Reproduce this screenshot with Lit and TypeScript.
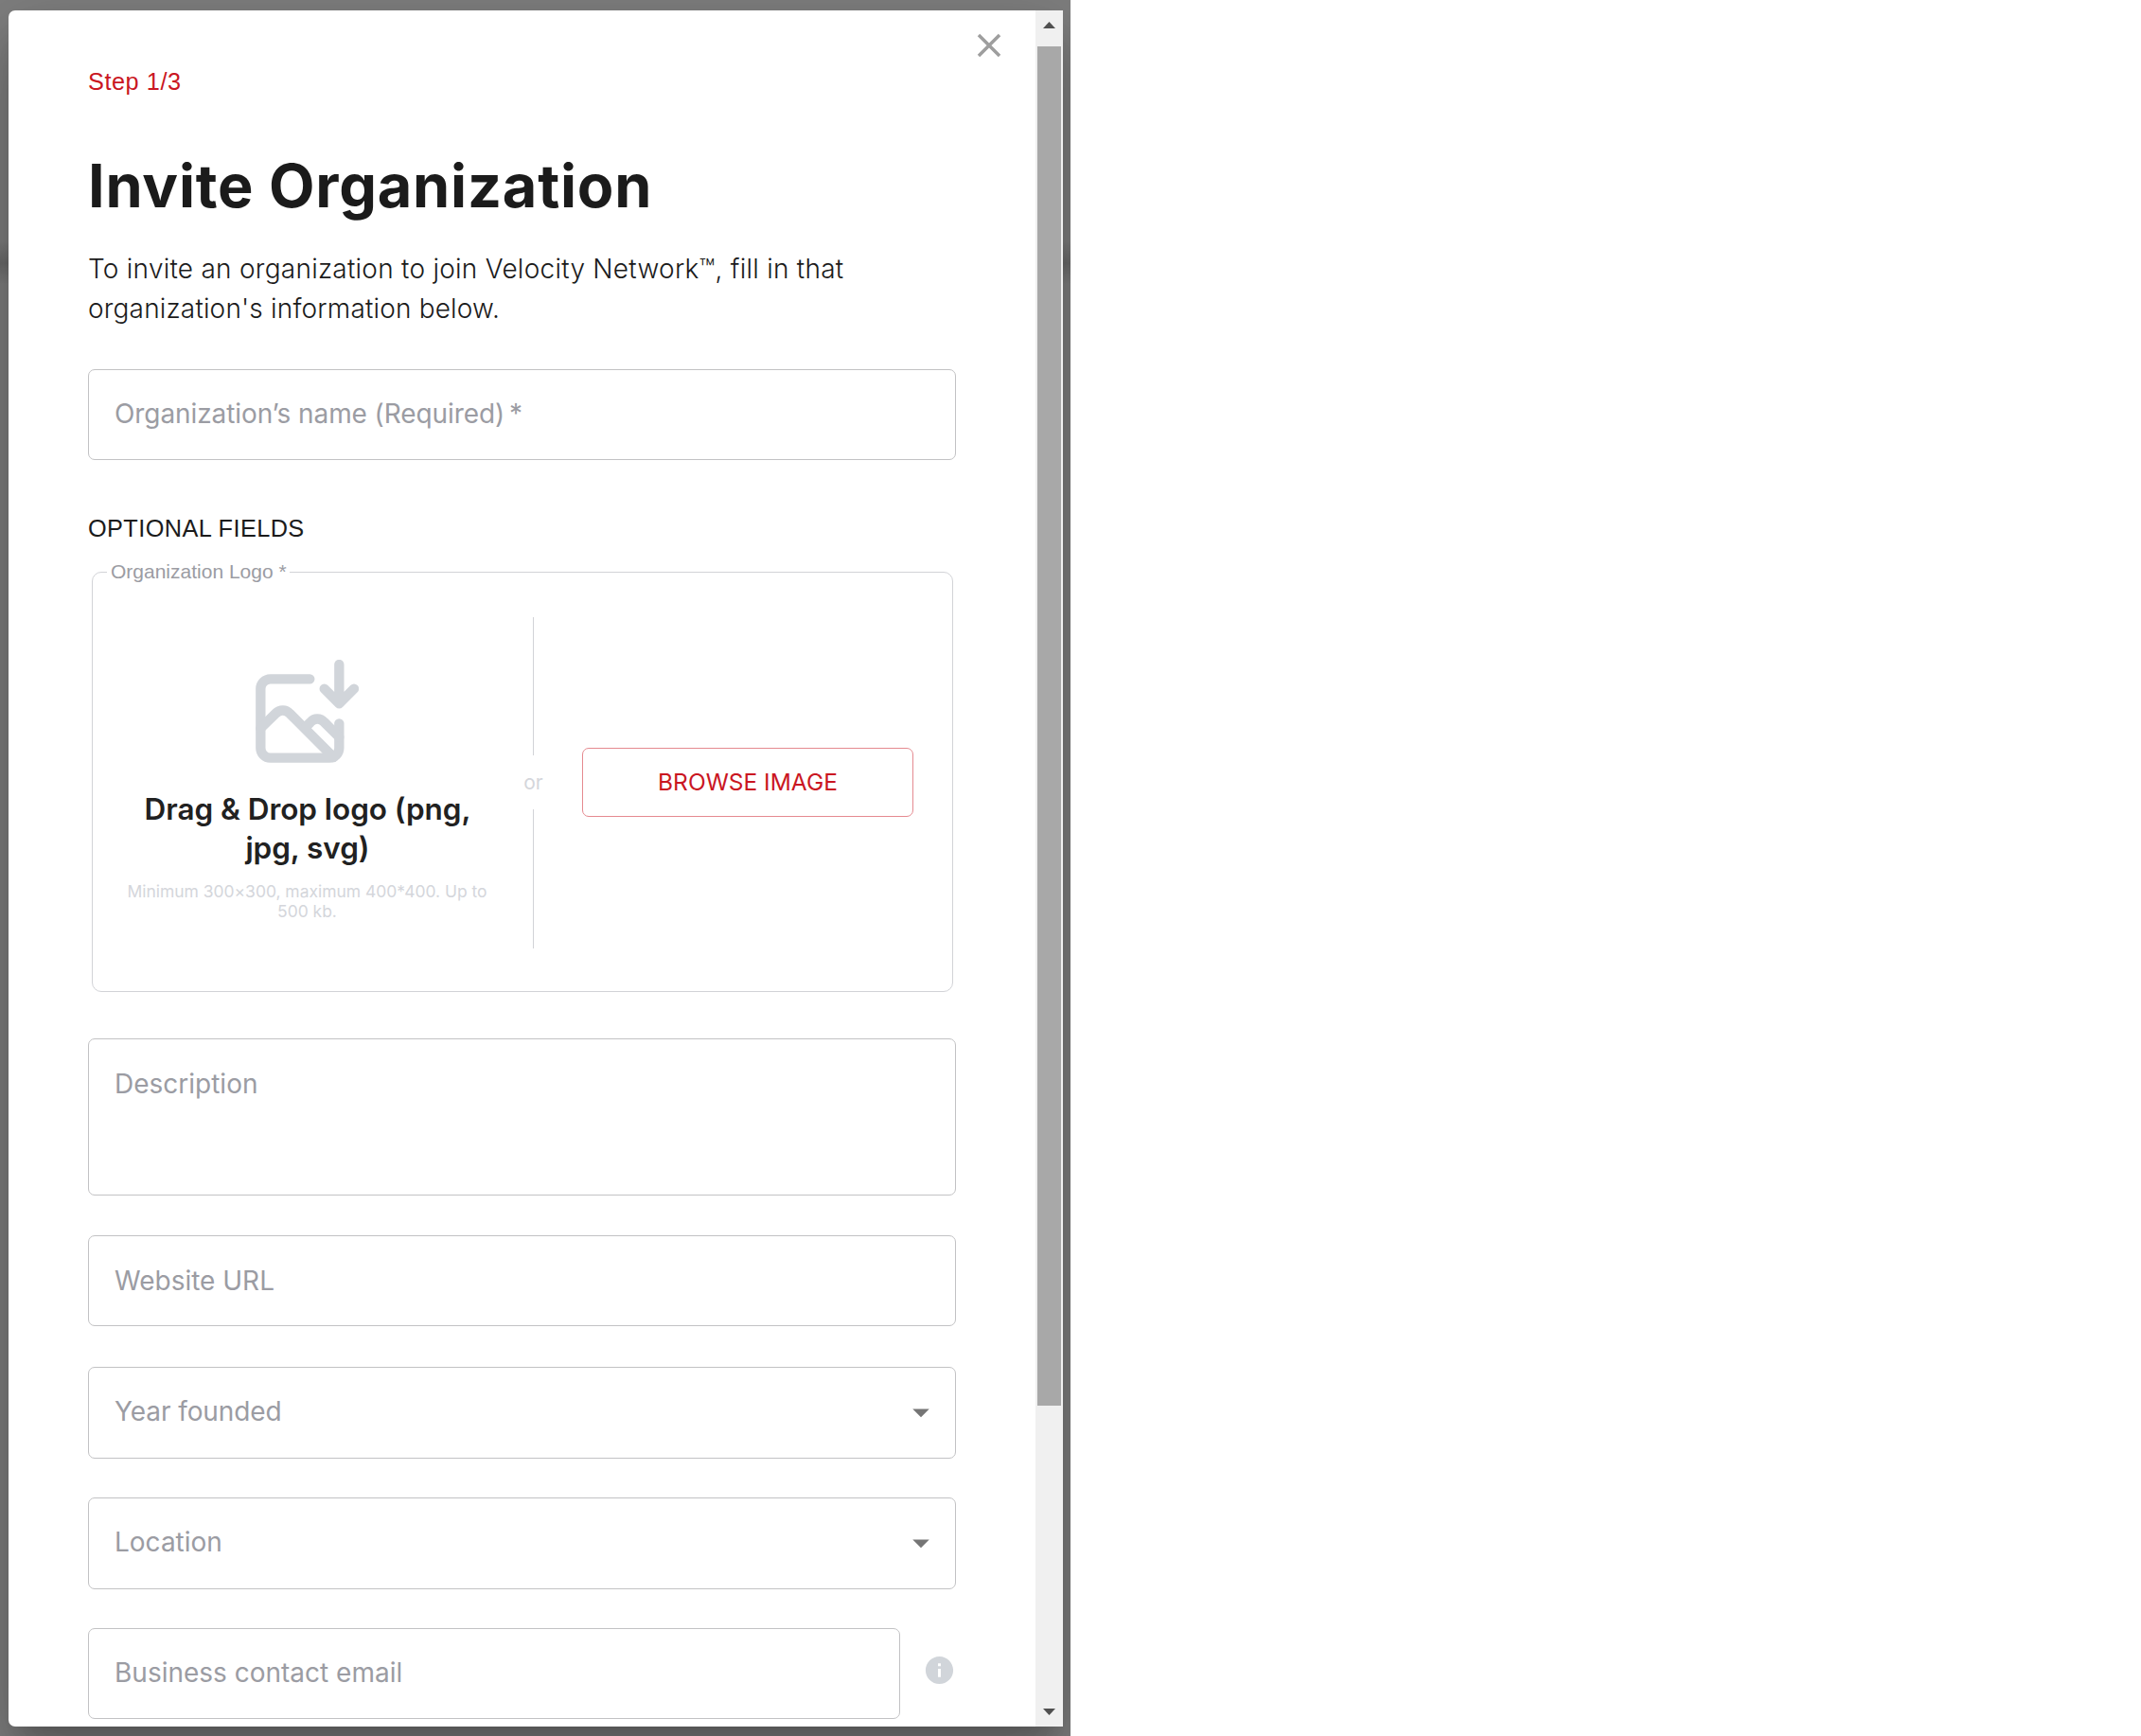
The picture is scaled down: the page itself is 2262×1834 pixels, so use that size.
import { LitElement, html, css, nothing } from "lit";
import { customElement, property } from "lit/decorators.js";
import { classMap } from "lit/directives/class-map.js";

@customElement("form-field")
class FormField extends LitElement {
  @property() label = "";
  @property({ reflect: true }) kind: "text" | "textarea" | "select" = "text";
  @property({ type: Boolean }) low = false;

  static styles = css`
    :host { display: block; }
    .box {
      box-sizing: border-box;
      display: flex;
      justify-content: space-between;
      height: 96px;
      padding: 25px 15px 0 27px;
      border: 1px solid #c2c2c4;
      border-radius: 7px;
      font: 400 28px/42px Inter, sans-serif;
      letter-spacing: inherit;
      color: #9b9ca3;
      white-space: nowrap;
    }
    .low { padding-top: 26px; }
    .textarea { height: 166px; }
    .select { height: 97px; }
    .arrow { width: 42px; height: 42px; margin-top: 1px; fill: #757575; }
  `;

  render() {
    const classes = {
      box: true,
      low: this.low,
      textarea: this.kind === "textarea",
      select: this.kind === "select",
    };
    return html`<div class=${classMap(classes)}>
      <span>${this.label}</span>
      ${this.kind === "select"
        ? html`<svg class="arrow" viewBox="0 0 24 24"><path d="M7 10l5 5 5-5z" /></svg>`
        : nothing}
    </div>`;
  }
}

@customElement("logo-upload")
class LogoUpload extends LitElement {
  static styles = css`
    :host { display: block; }
    .frame {
      position: relative;
      box-sizing: border-box;
      display: grid;
      grid-template-columns: 453px 25px 1fr;
      height: 444px;
      border: 1px solid #d2d3d7;
      border-radius: 10px;
      font-family: Inter, sans-serif;
    }
    .legend {
      position: absolute;
      top: -13px;
      left: 15px;
      box-sizing: border-box;
      width: 193px;
      padding-left: 4px;
      background: #fff;
      color: #9b9ca3;
      font: 400 21px/23px "Liberation Sans", Arial, sans-serif;
      white-space: nowrap;
    }
    .drop {
      display: flex;
      flex-direction: column;
      align-items: center;
      padding: 92px 0 0 1px;
      text-align: center;
      white-space: nowrap;
    }
    .picture {
      width: 109px;
      height: 109px;
      margin-right: 1px;
      fill: none;
      stroke: #d1d5da;
      stroke-width: 31;
      stroke-linecap: round;
      stroke-linejoin: round;
    }
    .headline {
      margin-top: 28px;
      color: #212121;
      font-size: 31.5px;
      font-weight: 600;
      line-height: 41px;
      letter-spacing: -0.05px;
    }
    .hint {
      margin: 15px 1px 0 0;
      color: #d4d6db;
      font-size: 17.5px;
      line-height: 21px;
      letter-spacing: -0.03px;
    }
    .divider {
      display: flex;
      flex-direction: column;
      align-items: center;
      padding-top: 47px;
    }
    .line { width: 1px; height: 146px; background: #d2d3d7; }
    .line:last-child { height: 147px; }
    .or {
      height: 57px;
      color: #d4d6db;
      font-size: 21px;
      line-height: 57px;
    }
    .browse { padding: 185px 0 0 39px; }
    .button {
      box-sizing: border-box;
      display: block;
      width: 350px;
      height: 73px;
      padding: 0 0 2px 0;
      border: 1px solid #e58a90;
      border-radius: 7px;
      background: #fff;
      color: #ca1622;
      font: 400 24.5px/30px Inter, sans-serif;
    }
  `;

  render() {
    return html`<div class="frame">
      <span class="legend">Organization Logo *</span>
      <div class="drop">
        <svg class="picture" viewBox="541 170 327 327">
          <path d="M713 231H588A31 31 0 0 0 557 262V450A31 31 0 0 0 588 481H775A31 31 0 0 0 806 450V372" />
          <path d="M806 185V309M759 262L806 309L853 262" />
          <path d="M557 387L604 341C618 327 637 327 650 341L788 479" />
          <path d="M700 383L715 368C727 354 746 354 759 368L806 415" />
        </svg>
        <div class="headline">Drag &amp; Drop logo (png,<br />jpg, svg)</div>
        <div class="hint">Minimum 300×300, maximum 400*400. Up to<br />500 kb.</div>
      </div>
      <div class="divider">
        <div class="line"></div>
        <div class="or">or</div>
        <div class="line"></div>
      </div>
      <div class="browse"><button class="button">BROWSE IMAGE</button></div>
    </div>`;
  }
}

@customElement("app-root")
class AppRoot extends LitElement {
  static styles = css`
    :host { display: block; height: 1834px; background: #fff; overflow: hidden; }
    .backdrop {
      box-sizing: border-box;
      width: 1131px;
      height: 1834px;
      padding: 11px 8px 10px 9px;
      overflow: hidden;
      background: linear-gradient(#7f7f7f 0, #7f7f7f 255px, #6c6c6c 278px, #7f7f7f 300px, #7f7f7f 100%);
    }
    .dialog {
      display: flex;
      height: 1813px;
      overflow: hidden;
      border-radius: 7px 0 0 7px;
      background: #fff;
      box-shadow: 0 19px 26px -12px rgba(0, 0, 0, 0.2), 0 42px 67px 5px rgba(0, 0, 0, 0.14),
        0 16px 81px 14px rgba(0, 0, 0, 0.12);
    }
    .content {
      position: relative;
      box-sizing: border-box;
      width: 1085px;
      padding: 58px 84px 0;
      color: #1b1b1b;
      font-family: Inter, sans-serif;
    }
    .close {
      position: absolute;
      top: 16px;
      left: 1015px;
      width: 42px;
      height: 42px;
      fill: #9e9e9e;
    }
    .step, .optional {
      font: 400 25.3px/35px "Liberation Sans", Arial, sans-serif;
      letter-spacing: 0.4px;
    }
    .step { color: #ca1622; letter-spacing: 0.55px; }
    .title {
      margin: 54px 0 0;
      font-size: 63px;
      font-weight: 700;
      line-height: 76px;
      letter-spacing: 0.77px;
    }
    .lead {
      margin: 29px 0 43px;
      font-size: 28px;
      font-weight: 300;
      line-height: 42px;
      white-space: nowrap;
    }
    .first { letter-spacing: 0.25px; }
    .second { letter-spacing: 0.17px; }
    .name { letter-spacing: -0.09px; }
    .optional { margin-top: 55px; }
    .logo { margin: 28px 3px 49px 4px; }
    .website { margin: 42px 0 43px; }
    .year { letter-spacing: -0.08px; }
    .location { margin: 41px 0; }
    .contact { display: flex; align-items: flex-start; }
    .email { width: 858px; }
    .info { width: 35px; height: 35px; margin: 27px 0 0 24px; fill: #d1d5da; }
    .scrollbar {
      box-sizing: border-box;
      display: flex;
      flex-direction: column;
      align-items: center;
      width: 29px;
      padding: 12px 0;
      background: #f0f0f0;
    }
    .caret { width: 13px; height: 7px; fill: #505050; }
    .thumb { width: 25px; height: 1436px; margin-top: 19px; background: #a8a8a8; }
    .spacer { flex: 1; }
  `;

  render() {
    return html`<div class="backdrop">
      <div class="dialog">
        <main class="content">
          <svg class="close" viewBox="0 0 24 24">
            <path d="M19 6.41L17.59 5 12 10.59 6.41 5 5 6.41 10.59 12 5 17.59 6.41 19 12 13.41 17.59 19 19 17.59 13.41 12z" />
          </svg>
          <div class="step">Step 1/3</div>
          <h1 class="title">Invite Organization</h1>
          <p class="lead">
            <span class="first">To invite an organization to join Velocity Network™, fill in that</span><br />
            <span class="second">organization's information below.</span>
          </p>
          <form-field class="name" label="Organization’s name (Required)&thinsp;*"></form-field>
          <div class="optional">OPTIONAL FIELDS</div>
          <logo-upload class="logo"></logo-upload>
          <form-field kind="textarea" low label="Description"></form-field>
          <form-field class="website" low label="Website URL"></form-field>
          <form-field class="year" kind="select" label="Year founded"></form-field>
          <form-field class="location" kind="select" label="Location"></form-field>
          <div class="contact">
            <form-field class="email" label="Business contact email"></form-field>
            <svg class="info" viewBox="0 0 24 24">
              <path d="M12 2C6.48 2 2 6.48 2 12s4.48 10 10 10 10-4.48 10-10S17.52 2 12 2zm1 15h-2v-6h2v6zm0-8h-2V7h2v2z" />
            </svg>
          </div>
        </main>
        <div class="scrollbar">
          <svg class="caret" viewBox="0 0 13 7"><path d="M6.5 0L13 7H0z" /></svg>
          <div class="thumb"></div>
          <div class="spacer"></div>
          <svg class="caret" viewBox="0 0 13 7"><path d="M0 0H13L6.5 7z" /></svg>
        </div>
      </div>
    </div>`;
  }
}
